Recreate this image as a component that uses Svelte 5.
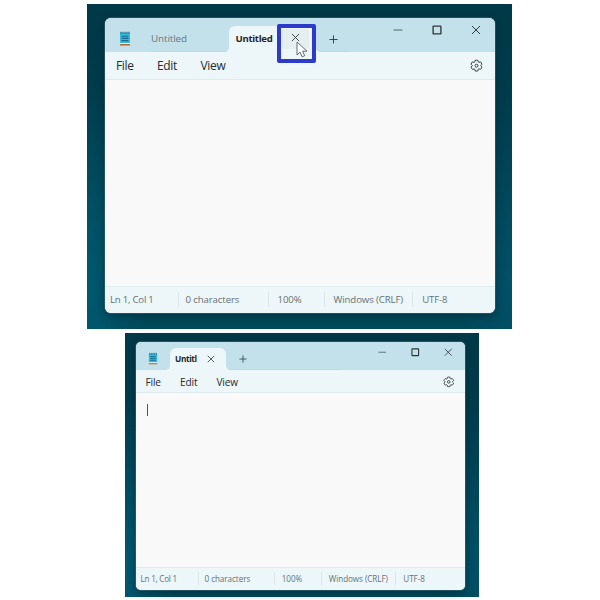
<script>
  const status = ['Ln 1, Col 1', '0 characters', '100%', 'Windows (CRLF)', 'UTF-8'];
  const menus = ['File', 'Edit', 'View'];
</script>

{#snippet cross()}
  <svg class="cross" viewBox="0 0 10 10"><path d="M1 1 9 9M9 1 1 9" /></svg>
{/snippet}

{#snippet notepad()}
  <svg class="notepad" viewBox="0 0 12 15">
    <path d="M1 1.6h10v10.6H1z" fill="#35b9de" />
    <path d="M1 12h10v1.2H1z" fill="#eef3f4" />
    <path d="M1 13.1h10v1.4H1z" fill="#b9642c" />
    <path d="M2.6 5.2h6.8M2.6 7.4h6.8M2.6 9.6h6.8" stroke="#146b8c" stroke-width="1.1" />
    <path d="M2 .7v2.2M4 .7v2.2M6 .7v2.2M8 .7v2.2M10 .7v2.2" stroke="#28657b" stroke-width=".9" />
  </svg>
{/snippet}

{#snippet gear()}
  <svg class="gear" viewBox="0 0 24 24">
    <path d="M9.4 2.5Q12 1.8 14.6 2.5L15.2 5.4Q15.7 6.1 16.6 6.2L19.4 5.3Q21.3 7.2 22 9.8L19.9 11.9Q19.7 12.3 19.9 12.8L22 14.8Q21.2 17.4 19.3 19.2L16.4 18.2Q15.6 18.3 15.1 19L14.6 22Q12 22.7 9.4 22L8.8 19Q8.3 18.3 7.5 18.2L4.6 19.2Q2.7 17.3 2 14.8L4.1 12.7Q4.3 12.2 4.1 11.8L2 9.7Q2.7 7.1 4.6 5.3L7.4 6.2Q8.3 6.1 8.8 5.4Z" />
    <circle cx="12" cy="12.3" r="2.7" />
  </svg>
{/snippet}

{#snippet frame(kind)}
  <section class="desktop {kind}">
    <div class="window">
      <header>
        <div class="app">{@render notepad()}</div>
        {#if kind === 'large'}<div class="inactive">Untitled</div>{/if}
        <div class="tab">
          <b>{kind === 'large' ? 'Untitled' : 'Untitl'}</b>
          <span class="close">
            {@render cross()}
            {#if kind === 'large'}
              <i class="highlight"></i>
              <svg class="cursor" viewBox="0 0 12 17"><path d="M1 1v13l3-2.8 2.1 4.6 2.6-1.1-2.1-4.5H11Z" /></svg>
            {/if}
          </span>
        </div>
        <div class="new"><svg class="plus" viewBox="0 0 10 10"><path d="M5 .5v9M.5 5h9" /></svg></div>
        <div class="controls">
          <svg class="min" viewBox="0 0 10 10"><path d="M.5 5h9" /></svg>
          <svg class="max" viewBox="0 0 10 10"><rect x="1.1" y="1.1" width="7.8" height="7.8" rx=".5" /></svg>
          {@render cross()}
        </div>
      </header>
      <nav>
        {#each menus as item}<span>{item}</span>{/each}
        {@render gear()}
      </nav>
      <main>{#if kind === 'small'}<div class="caret"></div>{/if}</main>
      <footer>
        {#each status as item}<span>{item}</span>{/each}
      </footer>
    </div>
  </section>
{/snippet}

<div class="page">
  {@render frame('large')}
  {@render frame('small')}
</div>

<style>
  :global(body) { margin: 0; background: #fff; overflow: hidden; }
  .page {
    width: 600px; height: 600px; box-sizing: border-box; padding-top: 4px;
    display: flex; flex-direction: column; align-items: center; gap: 4px;
    font-family: "Open Sans", "Noto Sans", sans-serif; color: #262c2f; background: #fff;
  }
  .desktop {
    box-sizing: border-box; flex: none;
    background: radial-gradient(ellipse 14% 65% at 0 88%, #005970, transparent), radial-gradient(ellipse 12% 60% at 100% 88%, #005066, transparent), linear-gradient(180deg, #003947, #003e4f 55%, #00495b);
  }
  .large { width: 425px; height: 325px; padding: 14px 17.5px 16.5px 17.5px; margin-right: 1px; }
  .small { width: 354px; height: 264px; padding: 9px 14.5px 7.5px 11px; margin-left: 4px; }
  .window {
    height: 100%; display: flex; flex-direction: column; overflow: hidden; background: #f9f9f9;
    border-radius: 6px; box-shadow: 0 0 0 1px #4d6f7877, 0 3px 9px #00202c88;
  }
  .small .window { border-radius: 5px; }
  svg { display: block; fill: none; stroke: #30383b; stroke-width: 1; flex: none; overflow: visible; }
  header { display: flex; flex: none; background: #c3e1ea; }
  .large header { height: 34px; }
  .small header { height: 28px; }
  .app { box-sizing: border-box; flex: none; }
  .large .app { width: 46.5px; padding: 12.5px 0 0 14px; }
  .small .app { width: 34px; padding: 10px 0 0 11.5px; }
  .notepad { width: 12px; height: 15px; stroke: none; }
  .small .notepad { width: 10px; height: 13px; }
  .inactive { width: 77.5px; padding-top: 14px; font-size: 9.8px; line-height: 14px; letter-spacing: -.08px; color: #66777f; }
  .inactive { box-sizing: border-box; height: 34px; box-shadow: inset 0 -1px #bad9e2; }
  .tab { position: relative; box-sizing: border-box; display: flex; flex: none; background: #edf6f9; border-radius: 6px 6px 0 0; }
  .tab::before, .tab::after { content: ""; position: absolute; bottom: 0; width: 4px; height: 4px; }
  .tab::before { right: 100%; background: radial-gradient(circle at 0 0, transparent 3.5px, #edf6f9 4px); }
  .tab::after { left: 100%; background: radial-gradient(circle at 100% 0, transparent 3.5px, #edf6f9 4px); }
  .large .tab { width: 87px; margin-top: 8px; padding: 6px 0 0 7px; }
  .small .tab { width: 55.5px; margin-top: 6px; padding: 5px 0 0 5px; }
  b { font-weight: 700; font-size: 9.6px; line-height: 14px; letter-spacing: -.32px; color: #20272a; flex: none; }
  .large b { width: 45px; }
  .small b { width: 30px; font-size: 8.3px; line-height: 12px; letter-spacing: -.38px; }
  .close { position: relative; box-sizing: border-box; flex: none; }
  .large .close { width: 28px; height: 20px; margin-top: -3px; padding: 4px 0 0 10px; background: #e5eef1; border-radius: 3px; }
  .small .close { padding: 1.5px 0 0 2px; }
  .close .cross { width: 9px; height: 9px; }
  .small .close .cross { width: 8px; height: 8px; }
  .highlight { position: absolute; box-sizing: border-box; left: -3.5px; top: -5px; width: 39px; height: 39px; border: 4px solid #2d3bcb; border-radius: 2px; }
  .cursor { position: absolute; left: 15px; top: 11.5px; width: 12px; height: 17px; fill: #fff; stroke: #555f64; stroke-width: .9; }
  .new { box-shadow: inset 0 -1px #bad9e2; }
  .large .new { width: 32px; }
  .small .new { width: 115px; }
  .plus { width: 9px; height: 9px; }
  .large .plus { margin: 16.5px 0 0 13.5px; }
  .small .plus { margin: 13px 0 0 13.5px; width: 8px; height: 8px; }
  .controls { display: flex; margin-left: auto; }
  .controls svg { width: 10px; height: 10px; }
  .controls .min { stroke: #526970; }
  .controls .max { stroke-width: 1.35; }
  .large .controls { padding: 7px 14px 0 0; gap: 29px; }
  .small .controls { padding: 5.5px 12px 0 0; gap: 24.5px; }
  .small .controls svg { width: 8.5px; height: 8.5px; }
  nav { box-sizing: border-box; display: grid; align-items: center; flex: none; background: #edf6f9; border-bottom: 1px solid #deebee; }
  .large nav { height: 28px; grid-template-columns: 41px 43.5px 1fr auto; padding: 0 12px 0 11.5px; font-size: 12px; letter-spacing: -.32px; }
  .small nav { height: 23px; grid-template-columns: 34.5px 36.5px 1fr auto; padding: 1px 10px 0 9.5px; font-size: 10.1px; letter-spacing: -.15px; }
  .gear { width: 13px; height: 13px; stroke-width: 1.8; }
  .small .gear { width: 11.5px; height: 11.5px; }
  main { flex: 1; box-sizing: border-box; padding: 11px; }
  .caret { width: 1px; height: 12px; background: #555; }
  footer { box-sizing: border-box; display: grid; align-items: center; flex: none; background: #edf6f9; border-top: 1px solid #e0ebee; color: #667176; white-space: nowrap; }
  .large footer { height: 27px; grid-template-columns: 68px 89.5px 56px 88.7px 1fr; padding: 0 0 1px 5.5px; font-size: 9.6px; letter-spacing: -.1px; }
  .small footer { height: 23px; grid-template-columns: 57.5px 75.5px 47px 74.5px 1fr; padding: 0 0 1px 4.5px; font-size: 8.1px; letter-spacing: -.05px; }
  footer span + span { border-left: 1px solid #dce6e9; }
  .large footer span + span { padding-left: 6.5px; line-height: 15px; }
  .small footer span + span { padding-left: 5.5px; line-height: 13px; }
  .large footer span:nth-child(n + 3) { padding-left: 9px; }
  .small footer span:nth-child(n + 3) { padding-left: 7.3px; }
  footer span:first-child { letter-spacing: -.22px; }
</style>
